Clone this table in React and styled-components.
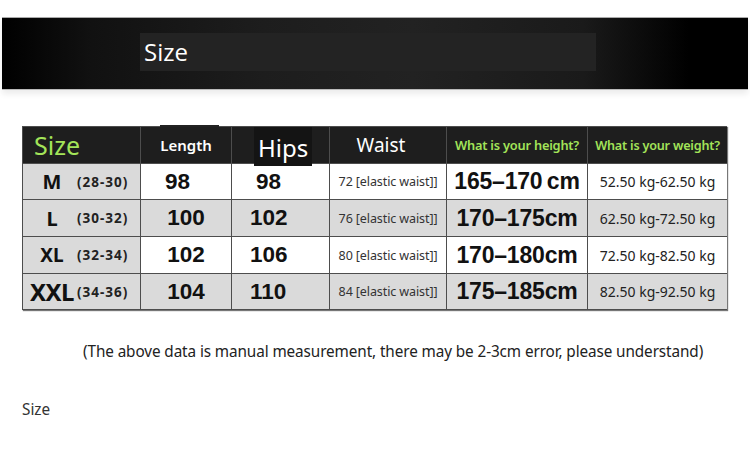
import React from "react";
import styled, { createGlobalStyle } from "styled-components";

const Global = createGlobalStyle`
  html, body { margin: 0; padding: 0; background: #fff; }
  body { font-family: "Noto Sans", "Open Sans", sans-serif; }
`;

const Page = styled.div`
  width: 750px;
  height: 458px;
  overflow: hidden;
  background: #fff;
  display: flex;
  flex-direction: column;
`;

const Banner = styled.div`
  margin: 17px 2px 0 2px;
  height: 71px;
  border-top: 1px solid #aaa;
  border-bottom: 1px solid #bbb;
  background: linear-gradient(90deg, #000 0%, #111 12%, #1d1d1d 35%, #222 55%, #1a1a1a 78%, #000 92%, #000 100%);
  box-shadow: 0 4px 6px rgba(0, 0, 0, 0.08);
  display: flex;
  align-items: center;
  padding-left: 138px;
`;

const BannerBox = styled.div`
  width: 452px;
  height: 38px;
  margin-top: -4px;
  background: #232323;
  display: flex;
  align-items: center;
  padding-left: 4px;
  color: #fff;
  font-family: "Open Sans", "Noto Sans", sans-serif;
  font-size: 24px;
`;

const TableWrap = styled.div`
  margin: 36px 0 0 22px;
  width: 705px;
  display: grid;
  grid-template-columns: 117px 90px 97px 116px 140px 139px;
  grid-template-rows: 36px 35px 36px 36px 35px;
  gap: 1px;
  padding: 1px;
  background: #4d4d4d;
  box-sizing: border-box;
  box-shadow: 1px 1px 1px #777;
`;

const Head = styled.div`
  background: #1e1e1e;
  color: ${(p) => (p.$green ? "#a3e459" : "#fff")};
  font-size: ${(p) => p.$size}px;
  font-weight: ${(p) => (p.$bold ? 600 : 400)};
  display: flex;
  align-items: center;
  justify-content: ${(p) => (p.$left ? "flex-start" : "center")};
  padding-left: ${(p) => (p.$left ? "11px" : "0")};
  padding-right: ${(p) => p.$pr || 0}px;
  white-space: nowrap;
  letter-spacing: ${(p) => p.$ls || 0}px;
  position: relative;
`;

const HipsTab = styled.span`
  position: absolute;
  left: 22px;
  top: 0;
  bottom: -3px;
  width: 58px;
  background: #141414;
  display: flex;
  align-items: center;
  padding: 2px 0 0 4px;
  box-sizing: border-box;
`;

const TopNotch = styled.span`
  position: absolute;
  left: 19px;
  top: -2px;
  width: 59px;
  height: 2px;
  background: #222;
`;

const Cell = styled.div`
  background: ${(p) => (p.$gray ? "#dadada" : "#fff")};
  display: flex;
  align-items: center;
  justify-content: ${(p) => p.$justify || "center"};
  white-space: nowrap;
  color: #111;
  overflow: hidden;
`;

const SizeName = styled.span`
  font-family: "Noto Sans", sans-serif;
  font-weight: 700;
  font-size: ${(p) => p.$size}px;
  width: 50px;
  padding-left: 4px;
  text-align: center;
  letter-spacing: ${(p) => p.$ls || 0}px;
`;

const SizeRange = styled.span`
  font-family: "Noto Sans", sans-serif;
  font-weight: 700;
  font-size: 13.5px;
  letter-spacing: 1px;
  color: #222;
`;

const Num = styled.span`
  font-family: "Liberation Sans", Arial, sans-serif;
  font-weight: 700;
  font-size: 22.5px;
  margin-left: ${(p) => p.$ml || 0}px;
`;

const WaistText = styled.span`
  font-family: "Noto Sans", sans-serif;
  font-size: 12.5px;
  color: #333;
  letter-spacing: -0.1px;
`;

const HeightText = styled.span`
  font-family: "Liberation Sans", Arial, sans-serif;
  font-weight: 700;
  font-size: 23px;
  letter-spacing: -0.2px;
`;

const WeightText = styled.span`
  font-family: "Noto Sans", sans-serif;
  font-size: 14px;
  color: #222;
`;

const Note = styled.div`
  margin: 30px 0 0 83px;
  font-family: "Noto Sans", sans-serif;
  font-size: 16px;
  color: #222;
  letter-spacing: -0.1px;
  transform: scaleX(0.955);
  transform-origin: left center;
  white-space: nowrap;
`;

const Footer = styled.div`
  margin: 35px 0 0 22px;
  font-family: "Noto Sans", sans-serif;
  font-size: 17px;
  color: #333;
  transform: scaleX(0.9);
  transform-origin: left center;
`;

const rows = [
  { n: "M", r: "(28-30)", len: "98", hips: "98", waist: "72", h: "165\u2013170\u2009cm", w: "52.50 kg-62.50 kg", ns: 20 },
  { n: "L", r: "(30-32)", len: "100", hips: "102", waist: "76", h: "170\u2013175cm", w: "62.50 kg-72.50 kg", ns: 20 },
  { n: "XL", r: "(32-34)", len: "102", hips: "106", waist: "80", h: "170\u2013180cm", w: "72.50 kg-82.50 kg", ns: 19 },
  { n: "XXL", r: "(34-36)", len: "104", hips: "110", waist: "84", h: "175\u2013185cm", w: "82.50 kg-92.50 kg", ns: 24 },
];

export default function App() {
  return (
    <Page>
      <Global />
      <Banner>
        <BannerBox>Size</BannerBox>
      </Banner>
      <TableWrap>
        <Head $green $size={25} $left>Size</Head>
        <Head $size={15} $bold>
          <TopNotch />
          Length
        </Head>
        <Head $size={24}>
          <HipsTab>Hips</HipsTab>
        </Head>
        <Head $size={19} $pr={14}>Waist</Head>
        <Head $green $size={12.8} $bold $ls={-0.2}>What is your height?</Head>
        <Head $green $size={12.6} $bold $ls={-0.2}>What is your weight?</Head>
        {rows.map((r, i) => {
          const gray = i % 2 === 1;
          return (
            <React.Fragment key={r.n}>
              <Cell $gray $justify="flex-start">
                <SizeName $size={r.ns} $ls={r.n === "XXL" ? -0.5 : 0}>{r.n}</SizeName>
                <SizeRange>{r.r}</SizeRange>
              </Cell>
              <Cell $gray={gray} $justify={i === 0 ? "flex-start" : "center"}>
                <Num $ml={i === 0 ? 24 : 0}>{r.len}</Num>
              </Cell>
              <Cell $gray={gray} $justify="flex-start">
                <Num $ml={i === 0 ? 24 : 18}>{r.hips}</Num>
              </Cell>
              <Cell $gray={gray}>
                <WaistText>{r.waist} [elastic waist]]</WaistText>
              </Cell>
              <Cell $gray={gray}>
                <HeightText>{r.h}</HeightText>
              </Cell>
              <Cell $gray={gray}>
                <WeightText>{r.w}</WeightText>
              </Cell>
            </React.Fragment>
          );
        })}
      </TableWrap>
      <Note>(The above data is manual measurement, there may be 2-3cm error, please understand)</Note>
      <Footer>Size</Footer>
    </Page>
  );
}
